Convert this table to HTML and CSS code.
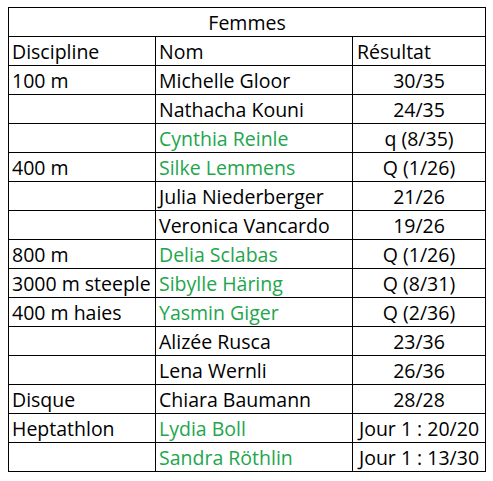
FILE: index.html
```html
<!DOCTYPE html>
<html>
<head><meta charset="utf-8"><link rel="stylesheet" href="styles.css"></head>
<body>
<table class="results">
<tr><td class="title" colspan="3">Femmes</td></tr>
<tr><td class="c1">Discipline</td><td class="c2">Nom</td><td class="c3 head">Résultat</td></tr>
<tr><td class="c1">100 m</td><td class="c2">Michelle Gloor</td><td class="c3">30/35</td></tr>
<tr><td class="c1"></td><td class="c2">Nathacha Kouni</td><td class="c3">24/35</td></tr>
<tr><td class="c1"></td><td class="c2 q">Cynthia Reinle</td><td class="c3">q (8/35)</td></tr>
<tr><td class="c1">400 m</td><td class="c2 q">Silke Lemmens</td><td class="c3">Q (1/26)</td></tr>
<tr><td class="c1"></td><td class="c2">Julia Niederberger</td><td class="c3">21/26</td></tr>
<tr><td class="c1"></td><td class="c2">Veronica Vancardo</td><td class="c3">19/26</td></tr>
<tr><td class="c1">800 m</td><td class="c2 q">Delia Sclabas</td><td class="c3">Q (1/26)</td></tr>
<tr><td class="c1">3000 m steeple</td><td class="c2 q">Sibylle Häring</td><td class="c3">Q (8/31)</td></tr>
<tr><td class="c1">400 m haies</td><td class="c2 q">Yasmin Giger</td><td class="c3">Q (2/36)</td></tr>
<tr><td class="c1"></td><td class="c2">Alizée Rusca</td><td class="c3">23/36</td></tr>
<tr><td class="c1"></td><td class="c2">Lena Wernli</td><td class="c3">26/36</td></tr>
<tr><td class="c1">Disque</td><td class="c2">Chiara Baumann</td><td class="c3">28/28</td></tr>
<tr><td class="c1">Heptathlon</td><td class="c2 q">Lydia Boll</td><td class="c3">Jour 1 : 20/20</td></tr>
<tr><td class="c1"></td><td class="c2 q">Sandra Röthlin</td><td class="c3">Jour 1 : 13/30</td></tr>
</table>
</body>
</html>
```
FILE: styles.css
```css
html, body { margin: 0; padding: 0; background: #fff; }
body { padding: 7px 0 0 8px; }
.results {
  border-collapse: collapse;
  font-family: "Open Sans", "Noto Sans", sans-serif;
  font-size: 19.5px;
  color: #000;
}
.results td {
  border: 1px solid #000;
  height: 28px;
  padding: 1px 3px 0;
  line-height: 27px;
  white-space: nowrap;
  box-sizing: border-box;
  overflow: hidden;
}
.results tr { height: 29px; }
.title { text-align: center; }
.c1 { width: 147px; }
.c2 { width: 197px; }
.c3 { width: 133px; text-align: center; }
.c3.head { text-align: left; padding-left: 4px; }
.q { color: #22a64c; }
```
